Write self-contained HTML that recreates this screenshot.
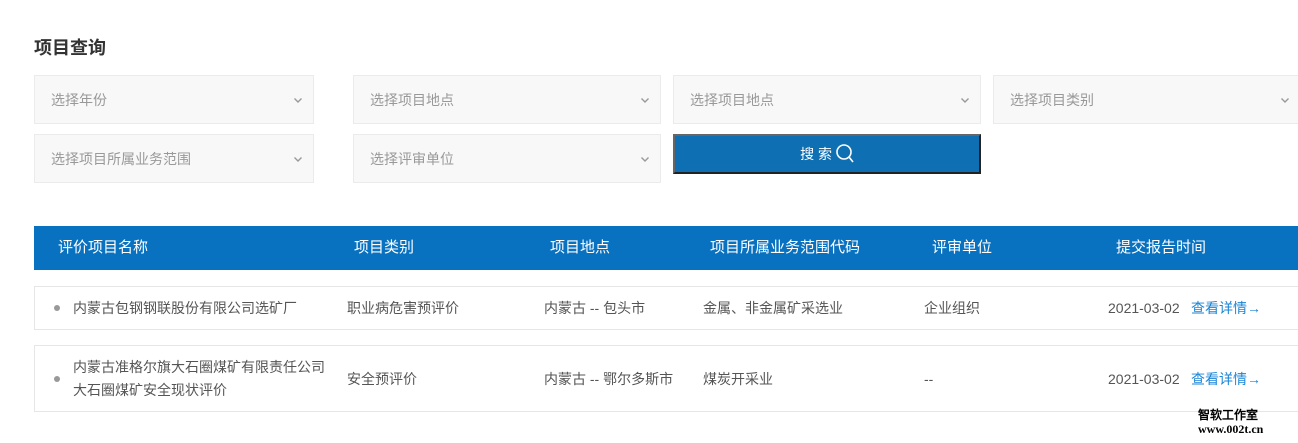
<!DOCTYPE html>
<html><head><meta charset="utf-8"><style>
body{margin:0;width:1298px;height:443px;overflow:hidden;background:#fff;font-family:"Liberation Sans","Noto Sans CJK SC",sans-serif;position:relative}
.a{position:absolute}
h1{position:absolute;left:34px;top:34px;margin:0;font-size:18px;font-weight:bold;color:#333}
.sel{position:absolute;height:49px;background:#f8f8f8;border:1px solid #ebebeb;box-sizing:border-box;font-size:14px;color:#999;line-height:48px;padding-left:16px}
.sel svg{position:absolute;right:10px;top:21px}
.btn{position:absolute;left:673px;top:134px;width:308px;height:40px;box-sizing:border-box;background:#0e6fb3;border:2px solid;border-color:#666 #222 #222 #666;color:#fff;font-size:14px;line-height:36px;text-align:center}
.hd{position:absolute;left:34px;top:226px;width:1264px;height:44px;background:#0872c1;color:#fff;font-size:15px}
.hd span,.r span{position:absolute;line-height:20px;white-space:nowrap}
.hd span{top:12px}
.r{position:absolute;left:34px;width:1270px;border:1px solid #e6e6e6;box-sizing:border-box;font-size:14px;color:#555}
.dot{width:6px;height:6px;border-radius:3px;background:#999}
.lk{color:#1a85d6}
</style></head><body>
<h1>项目查询</h1>
<div class="sel" style="left:34px;top:75px;width:280px">选择年份<svg width="10" height="7"><path d="M1.5 1.5l3.5 3.5 3.5-3.5" stroke="#999" stroke-width="1.4" fill="none"/></svg></div>
<div class="sel" style="left:353px;top:75px;width:308px">选择项目地点<svg width="10" height="7"><path d="M1.5 1.5l3.5 3.5 3.5-3.5" stroke="#999" stroke-width="1.4" fill="none"/></svg></div>
<div class="sel" style="left:673px;top:75px;width:308px">选择项目地点<svg width="10" height="7"><path d="M1.5 1.5l3.5 3.5 3.5-3.5" stroke="#999" stroke-width="1.4" fill="none"/></svg></div>
<div class="sel" style="left:993px;top:75px;width:315px">选择项目类别<svg width="10" height="7" style="right:17px"><path d="M1.5 1.5l3.5 3.5 3.5-3.5" stroke="#999" stroke-width="1.4" fill="none"/></svg></div>
<div class="sel" style="left:34px;top:134px;width:280px">选择项目所属业务范围<svg width="10" height="7"><path d="M1.5 1.5l3.5 3.5 3.5-3.5" stroke="#999" stroke-width="1.4" fill="none"/></svg></div>
<div class="sel" style="left:353px;top:134px;width:308px">选择评审单位<svg width="10" height="7"><path d="M1.5 1.5l3.5 3.5 3.5-3.5" stroke="#999" stroke-width="1.4" fill="none"/></svg></div>
<div class="btn">搜 索 <svg width="18" height="20" style="vertical-align:-5px"><circle cx="8" cy="8" r="7" stroke="#fff" stroke-width="1.6" fill="none"/><path d="M13 13l4 5" stroke="#fff" stroke-width="1.6"/></svg></div>
<div class="hd"><span style="left:24px">评价项目名称</span><span style="left:320px">项目类别</span><span style="left:516px">项目地点</span><span style="left:676px">项目所属业务范围代码</span><span style="left:898px">评审单位</span><span style="left:1082px">提交报告时间</span></div>
<div class="r" style="top:286px;height:44px"><span class="dot" style="left:19px;top:18px"></span><span style="left:38px;top:11px">内蒙古包钢钢联股份有限公司选矿厂</span><span style="left:312px;top:11px">职业病危害预评价</span><span style="left:509px;top:11px">内蒙古 -- 包头市</span><span style="left:668px;top:11px">金属、非金属矿采选业</span><span style="left:889px;top:11px">企业组织</span><span style="left:1073px;top:11px">2021-03-02</span><span class="lk" style="left:1156px;top:11px">查看详情→</span></div>
<div class="r" style="top:345px;height:67px"><span class="dot" style="left:19px;top:30px"></span><span style="left:38px;top:10px;line-height:23px">内蒙古准格尔旗大石圈煤矿有限责任公司<br>大石圈煤矿安全现状评价</span><span style="left:312px;top:23px">安全预评价</span><span style="left:509px;top:23px">内蒙古 -- 鄂尔多斯市</span><span style="left:668px;top:23px">煤炭开采业</span><span style="left:889px;top:23px">--</span><span style="left:1073px;top:23px">2021-03-02</span><span class="lk" style="left:1156px;top:23px">查看详情→</span></div>
<div class="a" style="left:1198px;top:408px;font-size:12px;font-weight:bold;color:#000;font-family:'Liberation Serif',serif;line-height:14px">智软工作室<br>www.002t.cn</div>
</body></html>
